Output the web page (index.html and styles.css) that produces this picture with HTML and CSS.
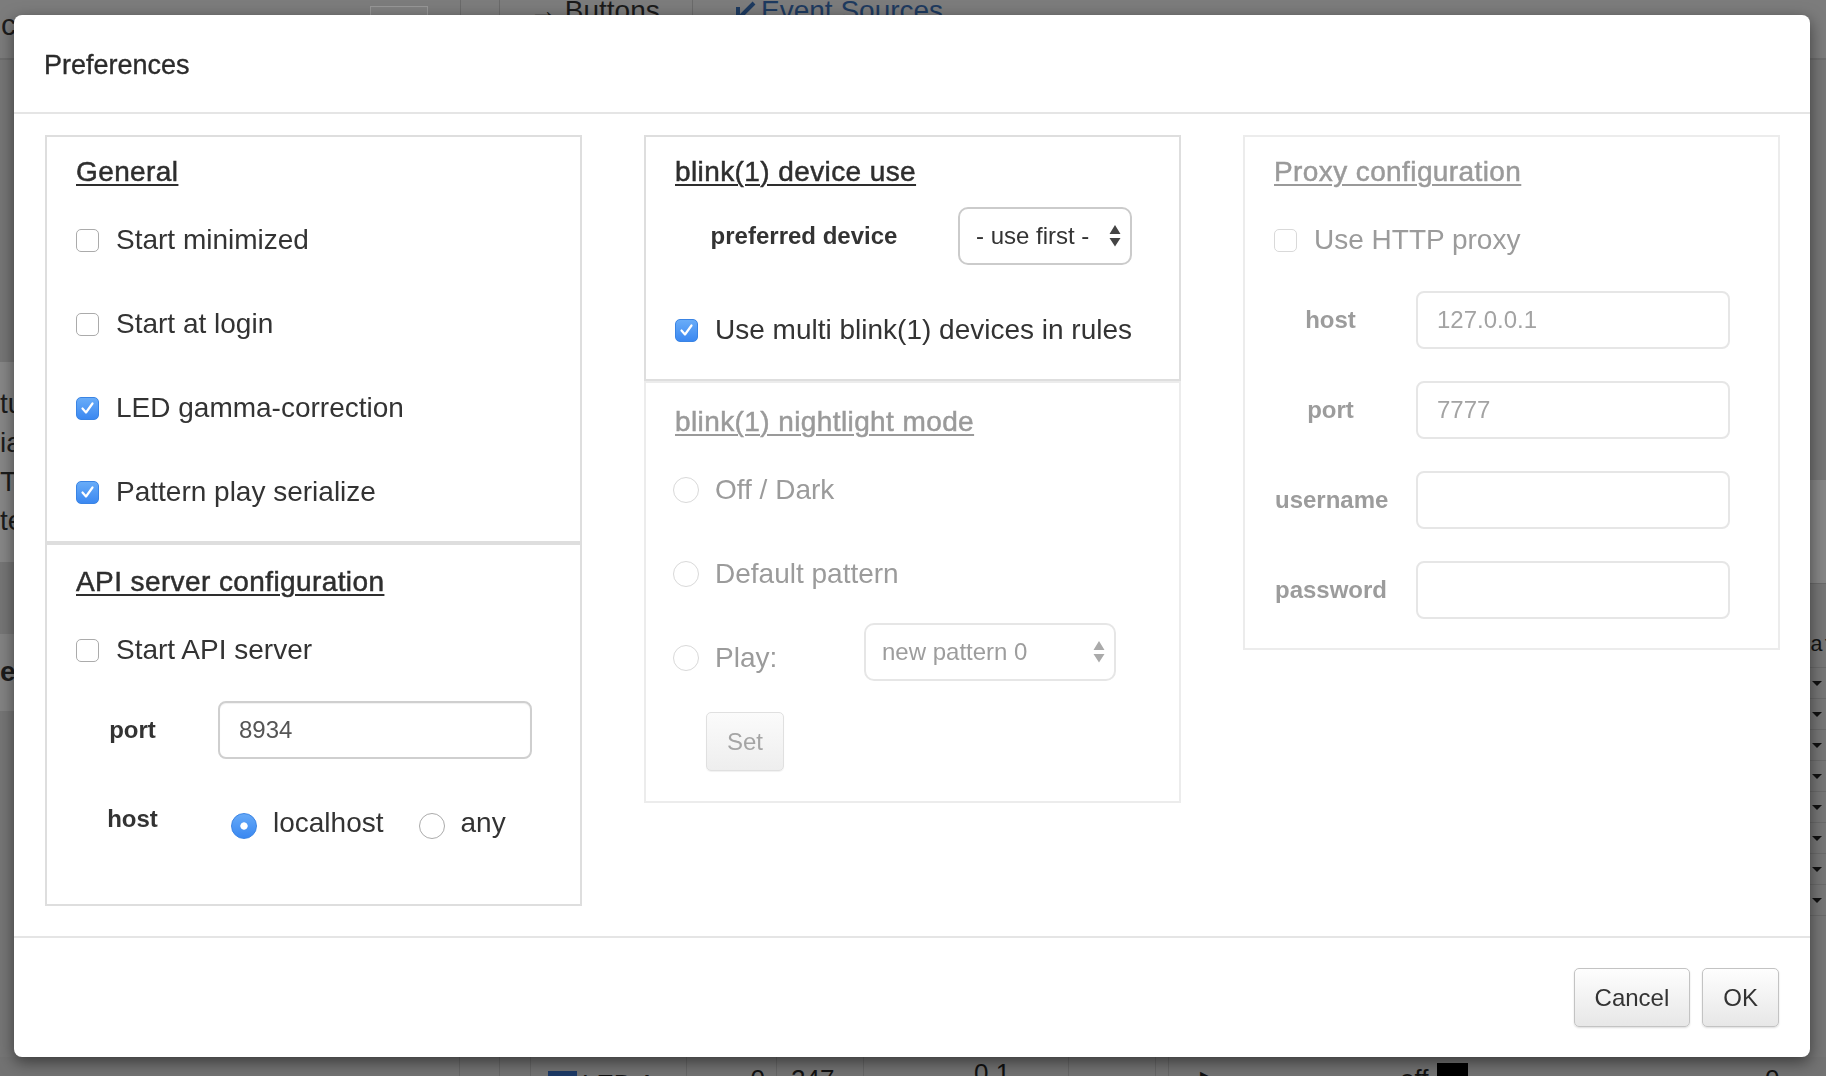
FILE: index.html
```html
<!DOCTYPE html>
<html lang="en">
<head>
<meta charset="utf-8">
<title>Preferences</title>
<link rel="stylesheet" href="styles.css">
</head>
<body>
<div class="app" aria-hidden="true">
  <div class="app-top">
    <div class="top-title">c</div>
    <div class="top-box"></div>
    <div class="top-sep sep-a"></div>
    <div class="top-sep sep-b"></div>
    <div class="top-tab tab-buttons">→ Buttons</div>
    <div class="top-sep"></div>
    <div class="top-tab tab-events"><svg class="tab-icon" width="24" height="26" viewBox="0 0 24 26"><path d="M21 3 L7 17 M5 7 V19 H17" stroke="#1e3a5f" stroke-width="4" fill="none"/></svg>Event Sources</div>
  </div>
  <div class="app-mid">
    <div class="side">
      <div class="side-top"></div>
      <div class="side-band">
        <div class="side-line">tu</div>
        <div class="side-line">ia</div>
        <div class="side-line">T</div>
        <div class="side-line">te</div>
      </div>
      <div class="side-mid"></div>
      <div class="side-band2"><div class="side-line side-bold">e</div></div>
    </div>
    <div class="rside">
      <div class="r-top"></div>
      <div class="r-band"></div>
      <div class="r-head">att</div>
      <div class="r-row"><span class="tri"></span></div>
      <div class="r-row"><span class="tri"></span></div>
      <div class="r-row"><span class="tri"></span></div>
      <div class="r-row"><span class="tri"></span></div>
      <div class="r-row"><span class="tri"></span></div>
      <div class="r-row"><span class="tri"></span></div>
      <div class="r-row"><span class="tri"></span></div>
      <div class="r-row"><span class="tri"></span></div>
    </div>
  </div>
  <div class="app-bottom">
    <div class="bcell b-a"></div>
    <div class="bcell b-b"></div>
    <div class="bcell b-c"></div>
    <div class="bcell b-d"><span class="led-sq"></span>LED A</div>
    <div class="bcell b-e">0</div>
    <div class="bcell b-f">247</div>
    <div class="bcell b-g">0.1</div>
    <div class="bcell b-h"></div>
    <div class="bcell b-i"></div>
    <div class="bcell b-j"><span class="play">▶</span><span class="off">off</span><span class="blk"></span><span class="zero">0</span></div>
  </div>
</div>

<div class="modal" role="dialog" aria-labelledby="prefs-title">
  <header class="modal-header">
    <h4 class="modal-title" id="prefs-title">Preferences</h4>
  </header>

  <div class="modal-body">
    <div class="col">
      <section class="box box-general">
        <h5 class="box-title">General</h5>
        <label class="check-row"><span class="cb"></span>Start minimized</label>
        <label class="check-row"><span class="cb"></span>Start at login</label>
        <label class="check-row"><span class="cb on"><svg class="tick" width="23" height="23" viewBox="0 0 23 23"><path d="M6.5 11.5 L10 15.5 L16.5 6.5" stroke="#fff" stroke-width="2.2" fill="none" stroke-linecap="round" stroke-linejoin="round"/></svg></span>LED gamma-correction</label>
        <label class="check-row"><span class="cb on"><svg class="tick" width="23" height="23" viewBox="0 0 23 23"><path d="M6.5 11.5 L10 15.5 L16.5 6.5" stroke="#fff" stroke-width="2.2" fill="none" stroke-linecap="round" stroke-linejoin="round"/></svg></span>Pattern play serialize</label>
      </section>

      <section class="box box-api">
        <h5 class="box-title">API server configuration</h5>
        <label class="check-row"><span class="cb"></span>Start API server</label>
        <div class="form-row">
          <label class="form-label" for="api-port">port</label>
          <input class="text-input" id="api-port" type="text" value="8934">
        </div>
        <div class="form-row radio-row">
          <span class="form-label">host</span>
          <div class="radio-group">
            <label class="radio-opt"><span class="rb on"></span>localhost</label>
            <label class="radio-opt"><span class="rb"></span>any</label>
          </div>
        </div>
      </section>
    </div>

    <div class="col">
      <section class="box box-device">
        <h5 class="box-title">blink(1) device use</h5>
        <div class="form-row device-row">
          <span class="form-label">preferred device</span>
          <div class="select select-device"><span>- use first -</span><svg class="arrows" width="12" height="22" viewBox="0 0 12 22"><path d="M6 0 L11.5 9 H0.5 Z M0.5 13 H11.5 L6 21.5 Z" fill="#444"/></svg></div>
        </div>
        <label class="check-row"><span class="cb on"><svg class="tick" width="23" height="23" viewBox="0 0 23 23"><path d="M6.5 11.5 L10 15.5 L16.5 6.5" stroke="#fff" stroke-width="2.2" fill="none" stroke-linecap="round" stroke-linejoin="round"/></svg></span>Use multi blink(1) devices in rules</label>
      </section>

      <section class="box box-night disabled">
        <h5 class="box-title">blink(1) nightlight mode</h5>
        <label class="check-row"><span class="rb"></span>Off / Dark</label>
        <label class="check-row"><span class="rb"></span>Default pattern</label>
        <div class="play-row">
          <label class="radio-opt"><span class="rb"></span>Play:</label>
          <div class="select select-pattern"><span>new pattern 0</span><svg class="arrows" width="12" height="22" viewBox="0 0 12 22"><path d="M6 0 L11.5 9 H0.5 Z M0.5 13 H11.5 L6 21.5 Z" fill="#aaa"/></svg></div>
        </div>
        <button class="btn btn-set" type="button" disabled>Set</button>
      </section>
    </div>

    <div class="col">
      <section class="box box-proxy disabled">
        <h5 class="box-title">Proxy configuration</h5>
        <label class="check-row"><span class="cb"></span>Use HTTP proxy</label>
        <div class="form-row">
          <span class="form-label">host</span>
          <input class="text-input" type="text" value="127.0.0.1" disabled>
        </div>
        <div class="form-row">
          <span class="form-label">port</span>
          <input class="text-input" type="text" value="7777" disabled>
        </div>
        <div class="form-row">
          <span class="form-label">username</span>
          <input class="text-input" type="text" value="" disabled>
        </div>
        <div class="form-row">
          <span class="form-label">password</span>
          <input class="text-input" type="password" value="" disabled>
        </div>
      </section>
    </div>
  </div>

  <footer class="modal-footer">
    <button class="btn" type="button">Cancel</button>
    <button class="btn" type="button">OK</button>
  </footer>
</div>
</body>
</html>
```

FILE: styles.css
```css
* { box-sizing: border-box; }

html, body { margin: 0; padding: 0; }

body {
  width: 1826px;
  height: 1076px;
  overflow: hidden;
  background: #777;
  font-family: "Liberation Sans", Arial, Helvetica, sans-serif;
  color: #333;
}

/* ---------- dimmed application behind the dialog ---------- */
.app {
  height: 1076px;
  display: flex;
  flex-direction: column;
}

.app-top {
  height: 60px;
  flex: none;
  display: flex;
  align-items: flex-start;
  background: #7c7c7c;
  border-bottom: 2px solid #6d6d6d;
}

.top-title {
  width: 370px;
  font-size: 30px;
  line-height: 30px;
  padding-top: 10px;
  padding-left: 1px;
  color: #1c1c1c;
}

.top-box {
  width: 58px;
  height: 46px;
  margin-top: 6px;
  border: 1px solid #979797;
  background: #808080;
}

.top-sep {
  width: 1px;
  align-self: stretch;
  background: #6a6a6a;
}
.sep-a { margin-left: 32px; }
.sep-b { margin-left: 38px; }

.top-tab {
  font-size: 28px;
  line-height: 28px;
  margin-top: -3px;
  color: #1a1a1a;
  white-space: nowrap;
}
.tab-buttons { margin-left: 29px; width: 163px; }
.tab-events {
  margin-left: 40px;
  color: #1e3a5f;
  display: flex;
  align-items: flex-start;
  gap: 4px;
}
.tab-icon { flex: none; margin-top: 3px; }

.app-mid {
  flex: 1;
  display: flex;
  justify-content: space-between;
  background: #767676;
  overflow: hidden;
}

.side {
  width: 120px;
  display: flex;
  flex-direction: column;
}
.side-top { height: 302px; }
.side-band {
  height: 200px;
  background: #878787;
  padding-top: 22px;
  overflow: hidden;
}
.side-line {
  font-size: 28px;
  line-height: 39px;
  color: #1c1c1c;
  white-space: nowrap;
}
.side-bold { font-weight: bold; }
.side-mid { height: 72px; }
.side-band2 {
  height: 77px;
  background: #838383;
  padding-top: 18px;
  overflow: hidden;
}

.rside {
  width: 16px;
  display: flex;
  flex-direction: column;
  overflow: hidden;
}
.r-top { height: 420px; }
.r-band {
  height: 104px;
  background: #868686;
  border-bottom: 1px solid #6a6a6a;
}
.r-head {
  height: 84px;
  padding-top: 50px;
  font-family: "Liberation Mono", monospace;
  font-size: 22px;
  line-height: 24px;
  color: #151515;
  white-space: nowrap;
  border-bottom: 1px solid #6a6a6a;
}
.r-row {
  height: 31px;
  flex: none;
  display: flex;
  align-items: center;
  border-bottom: 1px solid #6a6a6a;
}
.tri {
  width: 0;
  height: 0;
  margin-left: 2px;
  border-left: 5px solid transparent;
  border-right: 5px solid transparent;
  border-top: 5px solid #111;
}

.app-bottom {
  height: 19px;
  flex: none;
  display: flex;
  background: #737373;
}
.bcell {
  height: 19px;
  overflow: hidden;
  border-right: 1px solid #666;
  font-size: 26px;
  line-height: 26px;
  padding-top: 9px;
  color: #111;
  white-space: nowrap;
}
.b-a { width: 460px; }
.b-b { width: 40px; }
.b-c { width: 31px; }
.b-d { width: 156px; padding-left: 17px; display: flex; gap: 5px; padding-top: 14px; }
.led-sq { width: 29px; height: 20px; background: #1d3a66; flex: none; }
.b-e { width: 90px; text-align: right; padding-right: 11px; }
.b-f { width: 87px; padding-left: 14px; }
.b-g { width: 205px; padding-left: 110px; padding-top: 3px; }
.b-h { width: 87px; }
.b-i { width: 13px; }
.b-j { flex: 1; border-right: none; display: flex; padding-left: 31px; }
.play { width: 200px; font-size: 22px; }
.off { width: 37px; }
.blk { width: 31px; height: 20px; margin-top: -3px; background: #000; }
.zero { margin-left: 297px; }

/* ---------- dialog ---------- */
.modal {
  position: fixed;
  left: 14px;
  top: 15px;
  width: 1796px;
  height: 1042px;
  background: #fff;
  border-radius: 8px;
  box-shadow: 0 5px 16px rgba(0, 0, 0, 0.5);
  display: flex;
  flex-direction: column;
}

.modal-header {
  height: 99px;
  flex: none;
  padding: 35px 30px 0;
  border-bottom: 2px solid #e5e5e5;
}

.modal-title {
  margin: 0;
  font-size: 27px;
  line-height: 30px;
  font-weight: normal;
  color: #2b2b2b;
  -webkit-text-stroke: 0.35px currentColor;
}

.modal-body {
  flex: 1;
  display: grid;
  grid-template-columns: repeat(3, 1fr);
  column-gap: 62px;
  align-items: start;
  padding: 21px 30px 30px 31px;
}

.col {
  display: flex;
  flex-direction: column;
}

.box {
  border: 2px solid #dedede;
  padding: 15px 30px 29px;
  display: flex;
  flex-direction: column;
  align-items: flex-start;
}
.box-api { padding-top: 17px; padding-bottom: 61px; }
.box-night { padding-top: 19px; padding-bottom: 30px; border-color: #ececec; }
.box-proxy { border-color: #ececec; }

.box-title {
  margin: 0 0 0 -1px;
  font-size: 28px;
  line-height: 40px;
  font-weight: normal;
  letter-spacing: 0.4px;
  color: #2e2e2e;
  white-space: nowrap;
  text-decoration: underline;
  text-decoration-thickness: 2px;
  text-underline-offset: 3px;
  -webkit-text-stroke: 0.5px currentColor;
}
.disabled .box-title { color: #9a9a9a; }

.check-row {
  display: flex;
  align-items: center;
  height: 40px;
  font-size: 28px;
  line-height: 40px;
  color: #333;
  white-space: nowrap;
}

.box-title + .check-row { margin-top: 28px; }
.check-row + .check-row { margin-top: 44px; }
.check-row + .form-row { margin-top: 31px; }
.form-row + .form-row { margin-top: 32px; }
.form-row + .radio-row { margin-top: 44px; }
.box-title + .device-row { margin-top: 15px; }
.device-row + .check-row { margin-top: 45px; }
.check-row + .play-row { margin-top: 29px; }
.play-row + .btn-set { margin-top: 31px; }

.cb {
  width: 23px;
  height: 23px;
  flex: none;
  margin-right: 17px;
  margin-left: -1px;
  border: 1px solid #ababab;
  border-radius: 5px;
  background: #fff;
  display: flex;
  align-items: center;
  justify-content: center;
}
.cb.on {
  background: linear-gradient(#68acf8, #3b88f1);
  border-color: #3a84e4;
}
.tick { display: block; margin: -1px; }

.rb {
  width: 26px;
  height: 26px;
  flex: none;
  margin-right: 16px;
  border: 1px solid #ababab;
  border-radius: 50%;
  background: #fff;
}
.rb.on {
  background: radial-gradient(circle, #fff 0 3.3px, transparent 4px), linear-gradient(#65a9f8, #3a88f1);
  border-color: #3a84e4;
}
.check-row .rb,
.play-row .rb { margin-left: -3px; }

.disabled .check-row,
.disabled .radio-opt { color: #9b9b9b; }
.disabled .cb,
.disabled .rb { border-color: #d9d9d9; }

.form-row {
  display: grid;
  grid-template-columns: 111px 314px;
  column-gap: 30px;
  align-items: center;
}

.form-label {
  font-size: 24px;
  font-weight: bold;
  line-height: 40px;
  text-align: center;
  color: #333;
  white-space: nowrap;
}
.disabled .form-label { color: #9c9c9c; }

.text-input {
  width: 314px;
  height: 58px;
  margin: 0;
  border: 2px solid #cfcfcf;
  border-radius: 8px;
  padding: 0 19px;
  font: 24px "Liberation Sans", Arial, sans-serif;
  color: #555;
  background: #fff;
  outline: none;
  box-shadow: inset 0 1px 1px rgba(0, 0, 0, 0.06);
}
.disabled .text-input {
  border-color: #e6e6e6;
  color: #a3a3a3;
  background: #fff;
  box-shadow: none;
}

.radio-row {
  align-items: start;
  height: 40px;
}
.radio-row .form-label { line-height: 32px; }
.radio-row .rb { margin-top: 6px; }

.radio-group {
  display: flex;
  gap: 35px;
  padding-left: 13px;
}

.radio-opt {
  display: flex;
  align-items: center;
  height: 40px;
  font-size: 28px;
  line-height: 40px;
  white-space: nowrap;
}

.device-row {
  grid-template-columns: 256px 174px;
  column-gap: 26px;
}

.select {
  height: 58px;
  border: 2px solid #cbcbcb;
  border-radius: 10px;
  background: #fff;
  display: flex;
  align-items: center;
  justify-content: space-between;
  padding: 0 9px 0 16px;
  font-size: 24px;
  color: #333;
  white-space: nowrap;
}
.select-device { width: 174px; }
.arrows { display: block; flex: none; }

.play-row {
  display: grid;
  grid-template-columns: 188px 252px;
  align-items: center;
  height: 58px;
}
.play-row .radio-opt { margin-top: 12px; }
.select-pattern {
  width: 252px;
  border-color: #e6e6e6;
  color: #9d9d9d;
}

.btn {
  height: 59px;
  margin: 0;
  padding: 0 20px;
  border: 1px solid #c3c3c3;
  border-radius: 5px;
  background: linear-gradient(#fefefe, #e7e7e7);
  box-shadow: 0 1px 2px rgba(0, 0, 0, 0.14);
  font: 24px "Liberation Sans", Arial, sans-serif;
  color: #333;
}

.btn-set {
  width: 78px;
  padding: 0;
  margin-left: 30px;
  color: #a5a5a5;
  border-color: #e0e0e0;
  background: linear-gradient(#fbfbfb, #eeeeee);
  box-shadow: 0 1px 1px rgba(0, 0, 0, 0.06);
}

.modal-footer {
  flex: none;
  border-top: 2px solid #e5e5e5;
  padding: 30px 31px;
  display: flex;
  justify-content: flex-end;
  gap: 12px;
}
```
